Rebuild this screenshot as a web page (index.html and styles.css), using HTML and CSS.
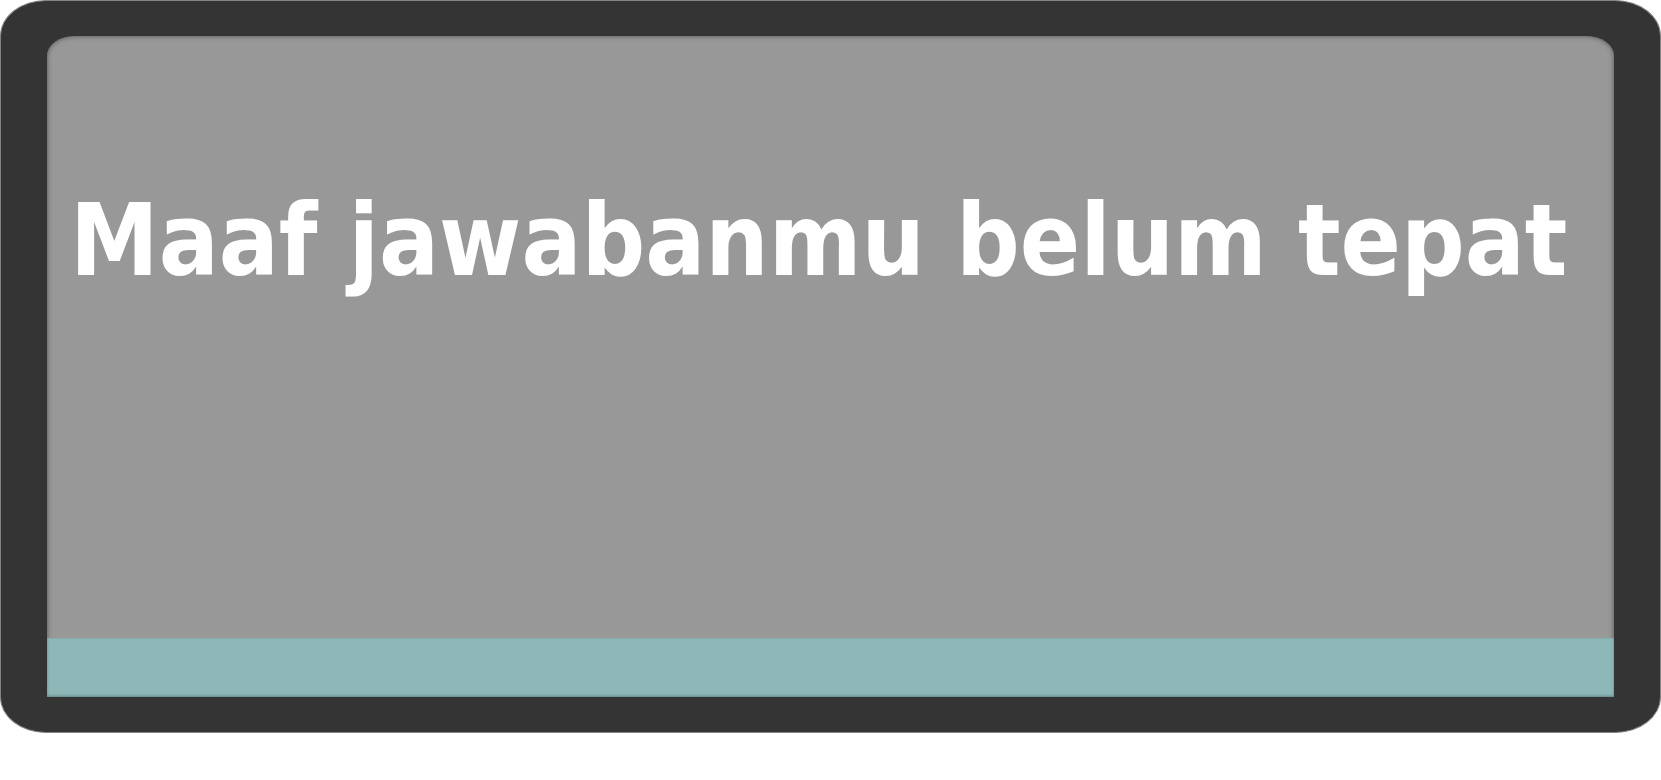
FILE: index.html
```html
<!DOCTYPE html>
<html lang="id">
<head>
<meta charset="utf-8">
<title>Maaf jawabanmu belum tepat</title>
<link rel="stylesheet" href="styles.css">
</head>
<body>
<main class="frame">
  <section class="panel">
    <h1 class="message">Maaf jawabanmu belum tepat</h1>
    <div class="strip"></div>
  </section>
</main>
</body>
</html>
```
FILE: styles.css
```css
body {
  margin: 0;
  background: #fff;
}

.frame {
  box-sizing: border-box;
  padding: 35px 46px;
  border: 1px solid #848484;
  border-radius: 46px / 36px;
  background: #343434;
}

.panel {
  overflow: hidden;
  border-radius: 28px 28px 0 0 / 20px 20px 0 0;
  background: #989898;
  box-shadow: inset 0 0 5px #505050;
}

.message {
  margin: 0;
  padding: 146px 24px 338px 23px;
  color: #fff;
  font: bold 99px/118px "DejaVu Sans Condensed", "DejaVu Sans", sans-serif;
  white-space: nowrap;
}

.strip {
  height: 59px;
  background: #8db8b7;
  box-shadow: inset 0 -1px 3px #628281;
}
```
